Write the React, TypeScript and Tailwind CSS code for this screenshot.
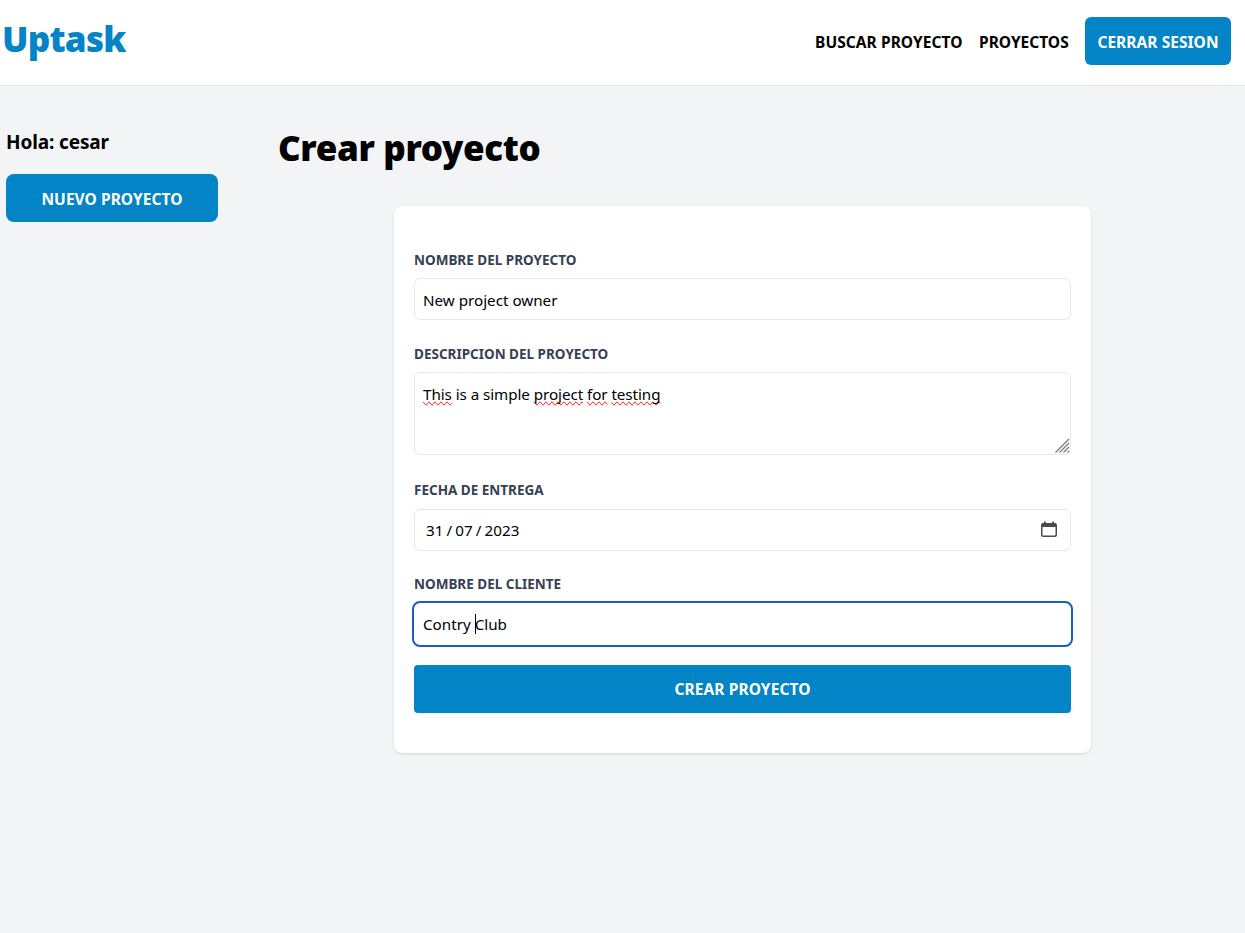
import type { ReactNode } from "react";

function Field({ label, className, children }: { label: string; className: string; children: ReactNode }) {
  return (
    <div className={`flex flex-col ${className}`}>
      <label className="text-[13.5px] leading-5 font-bold whitespace-nowrap text-gray-700 uppercase">{label}</label>
      {children}
    </div>
  );
}

function Misspelled({ children }: { children: ReactNode }) {
  return <span className="[text-decoration-line:spelling-error]">{children}</span>;
}

function CalendarIcon() {
  return (
    <svg width="16" height="17" viewBox="0 0 16 17" fill="none" className="mb-0.5 shrink-0">
      <rect x="0.75" y="2.75" width="14.5" height="12.5" rx="1.5" stroke="#4b4b4b" strokeWidth="1.5" />
      <path d="M1 2.5h14v3.5H1zM3 0.5h1.8v2H3zM11.2 0.5H13v2h-1.8z" fill="#4b4b4b" />
    </svg>
  );
}

export default function App() {
  return (
    <div className="flex h-[933px] w-full flex-col overflow-hidden bg-gray-100 font-['Noto_Sans','Open_Sans',sans-serif] text-[15.5px] leading-6 text-black">
      <header className="flex h-[86px] shrink-0 items-start justify-between border-b border-gray-200 bg-white pr-[14px] pl-[2px]">
        <h1 className="pt-[19px] text-[35px] leading-10 font-black tracking-[-0.75px] text-[#0284c7]">Uptask</h1>
        <nav className="flex items-center gap-4 pt-[17px] font-bold whitespace-nowrap uppercase">
          <a className="w-[148px] pt-0.5 tracking-[0.07px]">Buscar proyecto</a>
          <a className="w-[90px] pt-0.5">Proyectos</a>
          <button className="h-12 w-[146px] rounded-md bg-[#0284c7] pt-0.5 font-bold tracking-[0.05px] text-white uppercase">
            Cerrar sesion
          </button>
        </nav>
      </header>
      <div className="flex">
        <aside className="flex w-[278px] shrink-0 flex-col pt-[42px] pl-1.5">
          <p className="text-[19px] leading-7 font-bold tracking-[-0.12px]">Hola: cesar</p>
          <a className="mt-[18px] flex h-12 w-[212px] items-center justify-center rounded-lg bg-[#0284c7] pt-0.5 font-bold tracking-[0.05px] text-white uppercase">
            Nuevo proyecto
          </a>
        </aside>
        <main className="flex-1 pt-[42px]">
          <h2 className="text-[35px] leading-10 font-black tracking-[-0.35px] whitespace-nowrap">Crear proyecto</h2>
          <form className="mt-[38px] ml-[116px] flex h-[547px] w-[697px] flex-col rounded-lg bg-white px-5 pt-11 shadow-sm">
            <Field label="Nombre del proyecto" className="h-[94px]">
              <div className="mt-2 flex h-[42px] items-center rounded-md border border-gray-200 px-2 pt-px">
                <span className="text-[15.2px]">New project owner</span>
              </div>
            </Field>
            <Field label="Descripcion del proyecto" className="h-[136px]">
              <div className="mt-2 flex h-[83px] items-end justify-between rounded-md border border-gray-200 pl-2">
                <p className="self-start pt-[9px] text-[15.2px] tracking-[-0.06px]">
                  <Misspelled>This</Misspelled> is a simple <Misspelled>project</Misspelled> <Misspelled>for</Misspelled>{" "}
                  <Misspelled>testing</Misspelled>
                </p>
                <svg width="15" height="16" viewBox="0 0 15 16" stroke="#777" strokeWidth="1.2">
                  <path d="M0.5 14.5L14 1M4.5 14.5L14 5M8.5 14.5L14 9M12.5 14.5L14 13" />
                </svg>
              </div>
            </Field>
            <Field label="Fecha de entrega" className="h-[94px]">
              <div className="mt-[9px] flex h-[42px] items-center justify-between rounded-md border border-gray-200 pr-[13px] pl-[11px]">
                <span className="flex gap-[3px] text-[15.2px] tracking-[0.08px]">
                  <span>31</span>
                  <span>/</span>
                  <span>07</span>
                  <span>/</span>
                  <span>2023</span>
                </span>
                <CalendarIcon />
              </div>
            </Field>
            <Field label="Nombre del cliente" className="h-[91px]">
              <div className="mt-[9px] flex h-[42px] items-center rounded-md border border-white px-2 outline-2 outline-[#1a5fc0]">
                <span className="text-[15.2px]">Contry</span>
                <span className="ml-1 h-5 w-px bg-black" />
                <span className="-ml-px text-[15.2px]">Club</span>
              </div>
            </Field>
            <button className="h-12 w-full shrink-0 rounded bg-[#0284c7] font-bold tracking-[0.08px] text-white uppercase">
              Crear proyecto
            </button>
          </form>
        </main>
      </div>
    </div>
  );
}
